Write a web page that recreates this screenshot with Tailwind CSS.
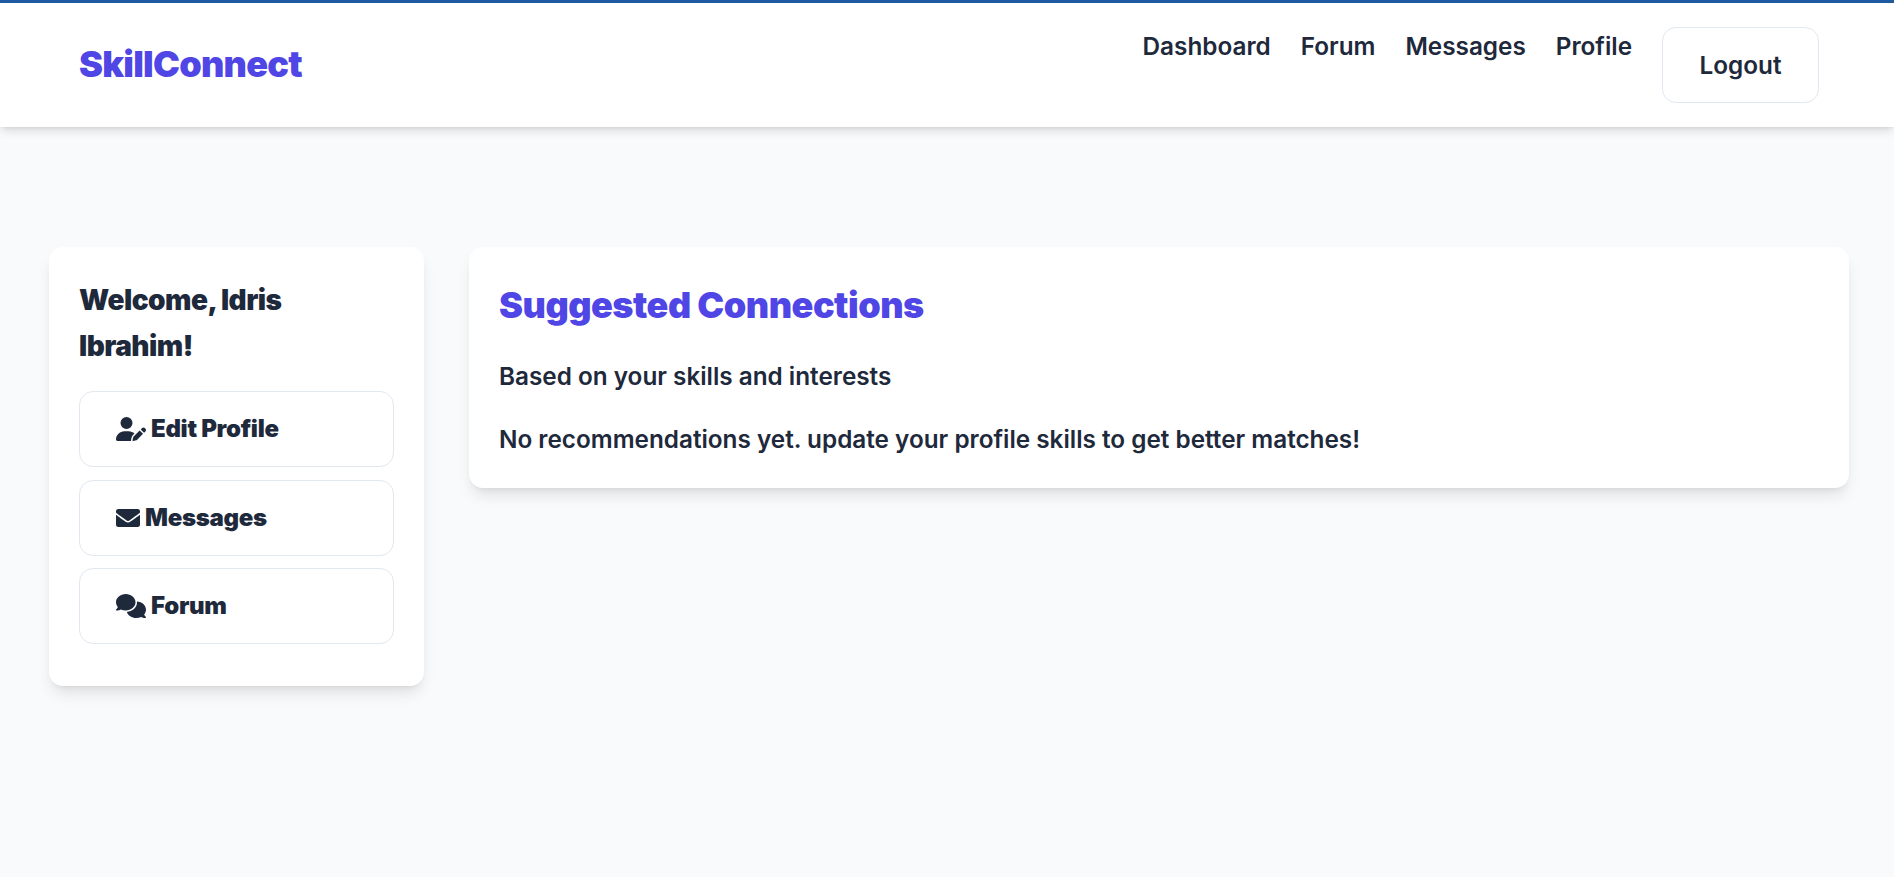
<!DOCTYPE html>
<html lang="en">
<head>
    <meta charset="UTF-8">
    <meta name="viewport" content="width=device-width, initial-scale=1.0">
    <title>SkillConnect</title>
    <script src="https://cdn.jsdelivr.net/npm/@tailwindcss/browser@4"></script>
</head>
<body class="min-h-screen bg-[#f8fafc] font-[Inter,sans-serif] text-[24.3px] leading-[38px] text-[#1e293b]">
    <nav class="relative flex justify-between items-start h-[127px] pt-[24px] pl-[79px] pr-[75px] bg-white border-t-[3px] border-[#1e5aa0] shadow-[0_4px_10px_-1px_rgba(0,0,0,0.14),0_2px_4px_-2px_rgba(0,0,0,0.1)]">
        <a href="#" class="mt-[16px] text-[36px] leading-[42px] font-black tracking-[-0.75px] text-[#4f46e5]">SkillConnect</a>
        <div class="flex items-start gap-[30px] font-semibold">
            <a href="#">Dashboard</a>
            <a href="#">Forum</a>
            <a href="#">Messages</a>
            <a href="#">Profile</a>
            <button class="px-[36.5px] py-[18px] font-semibold bg-white border border-[#e2e8f0] rounded-[14px]">Logout</button>
        </div>
    </nav>

    <main class="grid grid-cols-[375px_1fr] items-start gap-[45px] pt-[120px] pl-[49px] pr-[45px]">
        <aside class="p-[30px] pb-[42px] bg-white rounded-[14px] shadow-[0_10px_15px_-3px_rgba(0,0,0,0.1),0_4px_6px_-4px_rgba(0,0,0,0.1)]">
            <h3 class="mb-[22px] text-[28px] leading-[46px] font-black tracking-[-0.5px]">Welcome, Idris Ibrahim!</h3>
            <div class="flex flex-col gap-[12.5px] text-[24px]">
                <a href="#" class="flex items-center h-[76px] px-[36px] font-black tracking-[-0.3px] border border-[#e2e8f0] rounded-[14px]">
                    <svg class="w-[30px] h-[24px] mr-[5px] fill-current" viewBox="0 0 640 512"><path d="M224 256A128 128 0 1 0 224 0a128 128 0 1 0 0 256zm-45.7 48C79.8 304 0 383.8 0 482.3C0 498.7 13.3 512 29.7 512H322.8c-3.1-8.8-3.7-18.4-1.4-27.8l15-60.1c2.8-11.3 8.6-21.5 16.8-29.7l40.3-40.3c-32.1-31-75.7-50.1-123.9-50.1H178.3zm435.5-68.3c-15.6-15.6-40.9-15.6-56.6 0l-29.4 29.4 71 71 29.4-29.4c15.6-15.6 15.6-40.9 0-56.6l-14.4-14.4zM375.9 417c-4.1 4.1-7 9.2-8.4 14.9l-15 60.1c-1.4 5.5 .2 11.2 4.2 15.2s9.7 5.6 15.2 4.2l60.1-15c5.6-1.4 10.8-4.3 14.9-8.4L576.1 358.7l-71-71L375.9 417z"/></svg>
                    Edit Profile
                </a>
                <a href="#" class="flex items-center h-[76px] px-[36px] font-black tracking-[-0.3px] border border-[#e2e8f0] rounded-[14px]">
                    <svg class="w-[24px] h-[24px] mr-[5px] fill-current" viewBox="0 0 512 512"><path d="M502.3 190.8c3.9-3.1 9.7-.2 9.7 4.7V400c0 26.5-21.5 48-48 48H48c-26.5 0-48-21.5-48-48V195.6c0-5 5.7-7.8 9.7-4.7 22.4 17.4 52.1 39.5 154.1 113.6 21.1 15.4 56.7 47.8 92.2 47.6 35.7.3 72-32.8 92.3-47.6 102-74.1 131.6-96.3 154-113.7zM256 320c23.2.4 56.6-29.2 73.4-41.4 132.7-96.3 142.8-104.7 173.4-128.7 5.8-4.5 9.2-11.5 9.2-18.9v-19c0-26.5-21.5-48-48-48H48C21.5 64 0 85.5 0 112v19c0 7.4 3.4 14.3 9.2 18.9 30.6 23.9 40.7 32.4 173.4 128.7 16.8 12.2 50.2 41.8 73.4 41.4z"/></svg>
                    Messages
                </a>
                <a href="#" class="flex items-center h-[76px] px-[36px] font-black tracking-[-0.3px] border border-[#e2e8f0] rounded-[14px]">
                    <svg class="w-[30px] h-[24px] mr-[5px] fill-current" viewBox="0 0 640 512"><path d="M208 352c114.9 0 208-78.8 208-176S322.9 0 208 0S0 78.8 0 176c0 38.6 14.7 74.3 39.6 103.4c-3.5 9.4-8.7 17.7-14.2 24.7c-4.8 6.2-9.7 11-13.3 14.3c-1.8 1.6-3.3 2.9-4.3 3.7c-.5 .4-.9 .7-1.1 .8l-.2 .2 0 0 0 0C1 327.2-1.4 334.4 .8 340.9S9.1 352 16 352c21.8 0 43.8-5.6 62.1-12.5c9.2-3.5 17.8-7.4 25.3-11.4C134.1 343.3 169.8 352 208 352zM448 176c0 112.3-99.1 196.9-216.5 207C255.8 457.4 336.4 512 432 512c38.2 0 73.9-8.7 104.7-23.9c7.5 4 16 7.9 25.2 11.4c18.3 6.9 40.3 12.5 62.1 12.5c6.9 0 13.1-4.5 15.2-11.1c2.1-6.6-.2-13.8-5.8-17.9l0 0 0 0-.2-.2c-.2-.2-.6-.4-1.1-.8c-1-.8-2.5-2-4.3-3.7c-3.6-3.3-8.5-8.1-13.3-14.3c-5.5-7-10.7-15.4-14.2-24.7c24.9-29 39.6-64.7 39.6-103.4c0-92.8-84.9-168.9-192.6-175.5c.4 5.1 .6 10.3 .6 15.5z"/></svg>
                    Forum
                </a>
            </div>
        </aside>

        <section class="h-[241px] p-[30px] bg-white rounded-[14px] shadow-[0_10px_15px_-3px_rgba(0,0,0,0.1),0_4px_6px_-4px_rgba(0,0,0,0.1)]">
            <h2 class="mb-[24px] text-[36px] leading-[56px] font-black tracking-[-0.49px] text-[#4f46e5]">Suggested Connections</h2>
            <p class="mb-[25px] font-semibold">Based on your skills and interests</p>
            <p class="font-semibold">No recommendations yet. update your profile skills to get better matches!</p>
        </section>
    </main>
</body>
</html>
